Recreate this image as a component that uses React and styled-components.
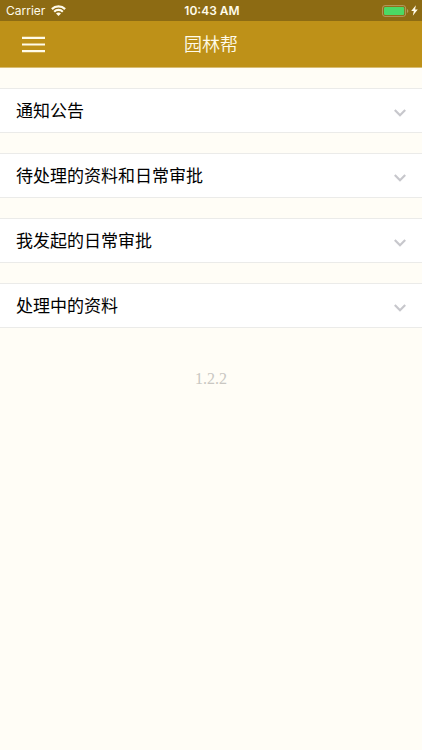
import React, { useState } from "react";
import styled, { createGlobalStyle } from "styled-components";

const GlobalStyle = createGlobalStyle`
  * { box-sizing: border-box; }
  html { background: #fffdf6; }
  body {
    margin: 0;
    background: #fffdf6;
    font-family: Inter, "Noto Sans CJK SC", sans-serif;
  }
  button { font: inherit; border: 0; padding: 0; background: none; cursor: pointer; }
`;

const Page = styled.div`
  display: flex;
  flex-direction: column;
  min-height: 100vh;
`;

const StatusBar = styled.div`
  display: grid;
  grid-template-columns: 1fr auto 1fr;
  align-items: center;
  height: 21px;
  padding: 0 4px 0 6px;
  background: #8d6b13;
  color: #fffbea;
  font-size: 12px;
  line-height: 20px;
`;

const StatusGroup = styled.div`
  display: flex;
  align-items: center;
  justify-content: ${({ $end }) => ($end ? "flex-end" : "flex-start")};
  gap: ${({ $end }) => ($end ? "2px" : "6px")};
`;

const Carrier = styled.span`
  font-family: Inter, sans-serif;
`;

const Clock = styled.time`
  font-weight: 600;
`;

const Header = styled.header`
  display: grid;
  grid-template-columns: 1fr auto 1fr;
  align-items: center;
  height: 47px;
  padding: 0 22px 2px;
  border-bottom: 1px solid #d8bd74;
  background: #be9118;
  color: #fffbea;
`;

const MenuButton = styled.button`
  display: flex;
  width: 24px;
  height: 24px;
  align-items: center;
  color: inherit;
`;

const Title = styled.h1`
  margin: 0;
  font-family: "Noto Sans CJK SC", sans-serif;
  font-size: 18px;
  font-weight: 350;
  line-height: 24px;
`;

const Sections = styled.main`
  display: flex;
  flex-direction: column;
  gap: 20px;
  padding-top: 20px;
`;

const SectionButton = styled.button`
  display: flex;
  width: 100%;
  height: 45px;
  align-items: center;
  justify-content: space-between;
  border-top: 1px solid #ebebe9;
  border-bottom: 1px solid #ebebe9;
  padding: 0 16px 2px;
  background: #fff;
  color: #000;
  text-align: left;
`;

const SectionLabel = styled.span`
  font-family: "Noto Sans CJK SC", sans-serif;
  font-size: 17px;
  line-height: 24px;
`;

const Chevron = styled.svg`
  flex: none;
  margin-top: 7px;
  transform: ${({ $open }) => ($open ? "rotate(180deg)" : "none")};
`;

const Version = styled.footer`
  margin-top: 41px;
  color: #c9c7c2;
  font-family: "Liberation Serif", serif;
  font-size: 16px;
  line-height: 20px;
  text-align: center;
`;

const sections = ["通知公告", "待处理的资料和日常审批", "我发起的日常审批", "处理中的资料"];

function WifiIcon() {
  return (
    <svg width="15" height="11" viewBox="0 0 15 11" fill="none" aria-hidden="true">
      <path d="M.9 4.1C4.5.5 10.5.5 14.1 4.1" stroke="currentColor" strokeWidth="2.2" />
      <path d="M3.2 6.7c2.4-2.4 6.2-2.4 8.6 0" stroke="currentColor" strokeWidth="2.1" />
      <path d="M7.5 10.9 5 8.4c1.4-1.3 3.6-1.3 5 0Z" fill="currentColor" />
    </svg>
  );
}

function BatteryIcon() {
  return (
    <svg width="27" height="12" viewBox="0 0 27 12" fill="none" aria-hidden="true">
      <rect x=".6" y=".6" width="23" height="10.8" rx="2.4" stroke="#b49a60" strokeWidth="1" />
      <rect x="2" y="2" width="20.2" height="8" rx="1.2" fill="#4cd964" />
      <path d="M25 4c1.8.7 1.8 3.3 0 4Z" fill="#b49a60" />
    </svg>
  );
}

function BoltIcon() {
  return (
    <svg width="7" height="11" viewBox="0 0 7 11" aria-hidden="true">
      <path d="M4.9.2.2 6.1h2.6L1.8 10.8 6.8 4.6H4.1Z" fill="currentColor" />
    </svg>
  );
}

function MenuIcon() {
  return (
    <svg width="24" height="20" viewBox="0 0 24 20" aria-hidden="true">
      <path d="M0 4.9h23M0 11.5h23M0 18.2h23" stroke="currentColor" strokeWidth="2.2" />
    </svg>
  );
}

function Section({ label }) {
  const [open, setOpen] = useState(false);
  return (
    <SectionButton type="button" aria-expanded={open} onClick={() => setOpen(!open)}>
      <SectionLabel>{label}</SectionLabel>
      <Chevron $open={open} width="12" height="8" viewBox="0 0 12 8" fill="none" aria-hidden="true">
        <path d="m.8 1 5.2 5.2L11.2 1" stroke="#c7c7cc" strokeWidth="2.2" />
      </Chevron>
    </SectionButton>
  );
}

export default function App() {
  return (
    <>
      <GlobalStyle />
      <Page>
        <StatusBar>
          <StatusGroup>
            <Carrier>Carrier</Carrier>
            <WifiIcon />
          </StatusGroup>
          <Clock>10:43 AM</Clock>
          <StatusGroup $end>
            <BatteryIcon />
            <BoltIcon />
          </StatusGroup>
        </StatusBar>
        <Header>
          <MenuButton type="button" aria-label="菜单">
            <MenuIcon />
          </MenuButton>
          <Title>园林帮</Title>
        </Header>
        <Sections>
          {sections.map((label) => (
            <Section key={label} label={label} />
          ))}
        </Sections>
        <Version>1.2.2</Version>
      </Page>
    </>
  );
}
